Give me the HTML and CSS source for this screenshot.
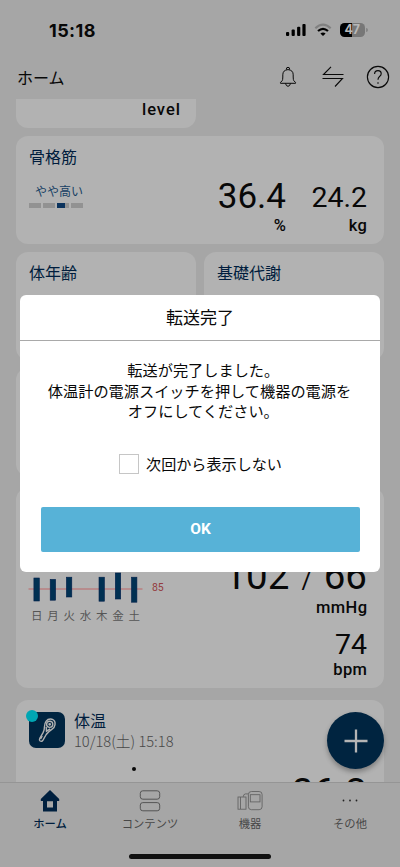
FILE: index.html
```html
<!DOCTYPE html>
<html lang="ja">
<head>
<meta charset="utf-8">
<meta name="viewport" content="width=device-width, initial-scale=1">
<title>ホーム</title>
<link rel="stylesheet" href="styles.css">
</head>
<body>
<div class="app">
  <div class="status">
    <span class="time">15:18</span>
    <div class="status-icons">
      <svg width="20" height="14" viewBox="0 0 20 14"><rect x="0" y="9" width="3.2" height="4" rx="1"/><rect x="5.6" y="6.6" width="3.2" height="6.4" rx="1"/><rect x="11.1" y="3.8" width="3.2" height="9.2" rx="1"/><rect x="16.4" y="1" width="3.2" height="12" rx="1"/></svg>
      <svg class="wifi" width="18" height="14" viewBox="0 0 18 14" fill="none"><path d="M1.3 5.2Q9-1.8 16.7 5.2" stroke="#818181" stroke-width="2.2"/><path d="M4 8Q9 3.6 14 8" stroke="#000" stroke-width="2.2"/><path d="M9 13L6.4 10.4Q9 8.4 11.6 10.4Z" fill="#000"/></svg>
      <div class="battery"><span>47</span></div>
      <i class="battery-tip"></i>
    </div>
  </div>
  <header class="topbar">
    <h1>ホーム</h1>
    <div class="actions">
      <svg width="18" height="22" viewBox="0 0 18 22" fill="none" stroke="#090909"><path d="M1.5 17.3H16.5V16.4L14.8 14.7Q14.2 13.9 14.2 11V8.8Q14.2 4.1 9 3.6Q3.8 4.1 3.8 8.8V11Q3.8 13.9 3.2 14.7L1.5 16.4Z"/><path d="M7.5 3.5Q7 1.3 9 1.3Q11 1.3 10.5 3.5M6.5 17.5Q7.2 20.3 9 20.3Q10.8 20.3 11.5 17.5"/></svg>
      <svg width="22" height="22" viewBox="0 0 22 22" fill="none" stroke="#090909" stroke-width="1.1"><path d="M9 .8L1.5 8.5H21.5M.5 12.5H20.5L13 20.5"/></svg>
      <svg width="24" height="24" viewBox="0 0 24 24" fill="none" stroke="#090909" stroke-width="1.15"><circle cx="12" cy="12" r="10.6"/><path d="M8.6 9Q8.6 5.6 12 5.6Q15.2 5.6 15.2 8.7Q15.2 10.2 13.5 11.5Q12 12.7 12 14.8"/><circle cx="12" cy="18" r=".8" fill="#090909" stroke="none"/></svg>
    </div>
  </header>

  <main class="feed">
    <section class="card level-card"><span class="unit">level</span></section>

    <section class="card muscle">
      <h2>骨格筋</h2>
      <div class="muscle-row">
        <div class="rating">
          <span class="rating-text">やや高い</span>
          <div class="rating-bar"><i></i><i></i><i class="on"></i><i></i></div>
        </div>
        <div class="value"><b class="num">36.4</b><span class="unit">%</span></div>
        <div class="value second"><b class="num small">24.2</b><span class="unit">kg</span></div>
      </div>
    </section>

    <div class="pair">
      <section class="card"><h2>体年齢</h2></section>
      <section class="card"><h2>基礎代謝</h2></section>
    </div>
    <div class="pair">
      <section class="card"></section>
    </div>

    <section class="card pressure">
      <div class="chart">
        <div class="plot">
          <svg width="115" height="32" viewBox="0 0 115 32">
            <path d="M.5 18H114.5" stroke="#b97f80" stroke-width="1.5"/>
            <g fill="#003052" stroke="#001f4b" stroke-width=".6"><rect x="5.9" y="7" width="5.4" height="23"/><rect x="22.2" y="8.4" width="5.4" height="20.8"/><rect x="38.4" y="6.2" width="5.4" height="19.8"/><rect x="71" y="6.2" width="5.4" height="24"/><rect x="87.3" y="2" width="5.4" height="26"/><rect x="103.5" y="6.2" width="5.4" height="25"/></g>
          </svg>
          <span class="limit">85</span>
        </div>
        <div class="days"><span>日</span><span>月</span><span>火</span><span>水</span><span>木</span><span>金</span><span>土</span></div>
      </div>
      <div class="readings">
        <div class="num big">102<span class="slash">/</span>66</div>
        <span class="unit">mmHg</span>
        <div class="num pulse">74</div>
        <span class="unit">bpm</span>
      </div>
    </section>

    <section class="card temp">
      <div class="temp-head">
        <div class="temp-icon">
          <svg width="36" height="36" viewBox="0 0 36 36" fill="none" stroke="#b2b2b2" stroke-width="1.4"><path d="M17.2 9.2Q19.3 6.4 22.9 7.2Q26.6 8.4 26 12.7Q25.8 15.3 22.8 17.3Q19 19.8 17.2 22.5L14 28.2Q12.9 30 11.1 29Q9.9 28.1 10.8 26.4L14.2 20.4Q15.4 18 15.5 14.5Q15.6 11.4 17.2 9.2Z"/><circle cx="20.7" cy="12.3" r="3.1"/><path d="M17.2 15L17.5 19.2L21.2 16.8M13.2 24L11.6 27"/><circle cx="20.7" cy="12.3" r=".7"/></svg>
          <i class="new-dot"></i>
        </div>
        <div>
          <h2>体温</h2>
          <p class="date">10/18(土) 15:18</p>
        </div>
      </div>
      <div class="temp-row"><i class="point"></i><span class="num temp-num">36.2</span></div>
    </section>
  </main>

  <nav class="tabs">
    <div class="tab active"><svg width="20" height="24" viewBox="0 0 20 24"><path fill-rule="evenodd" fill="#00203f" d="M10 1L19.2 10V12H17V22.5H3V12H.8V10ZM7 12.2V18.5H13V12.2Z"/></svg><span>ホーム</span></div>
    <div class="tab"><svg width="22" height="24" viewBox="0 0 22 24" fill="none" stroke="#555"><rect x="1.3" y="1.8" width="19.4" height="8.4" rx="2.5"/><rect x="1.3" y="13.6" width="19.4" height="8.2" rx="2.5"/></svg><span>コンテンツ</span></div>
    <div class="tab"><svg width="26" height="24" viewBox="0 0 26 24" fill="none" stroke="#606060" stroke-width=".85"><rect x="11.4" y="2.5" width="13.7" height="18.2" rx="3"/><rect x="13.3" y="5.7" width="9.7" height="7.2"/><rect x="1" y="8" width="8" height="12.2"/><path d="M3.5 8V20M6.2 7.8Q6.5 4.9 8.5 4.9H11.5"/></svg><span>機器</span></div>
    <div class="tab"><svg width="20" height="24" viewBox="0 0 20 24" fill="#222"><circle cx="3.5" cy="11.5" r=".9"/><circle cx="10" cy="11.5" r=".9"/><circle cx="16.5" cy="11.5" r=".9"/></svg><span>その他</span></div>
  </nav>
  <div class="home-area"><i></i></div>

  <div class="fab"><svg width="24" height="24" viewBox="0 0 24 24"><path d="M12 .5V23.5M.5 12H23.5" stroke="#b5b5b5" stroke-width="2.3"/></svg></div>

  <div class="dialog">
    <div class="dialog-title">転送完了</div>
    <div class="dialog-body">
      <p>転送が完了しました<span class="stop">。</span><br>体温計の電源スイッチを押して機器の電源を<br>オフにしてください<span class="stop">。</span></p>
      <label class="check"><i></i><span>次回から表示しない</span></label>
      <button class="ok">OK</button>
    </div>
  </div>
</div>
</body>
</html>
```
FILE: styles.css
```css
* { box-sizing: border-box; margin: 0; padding: 0; }
body { font-family: "Noto Sans CJK JP", sans-serif; color: #080808; background: #a6a6a6; }
i { font-style: normal; display: block; }
svg { display: block; flex: none; }
.app { position: relative; width: 400px; height: 867px; overflow: hidden; display: flex; flex-direction: column; }

.status { height: 56px; padding: 20px 33px 0 49px; display: flex; justify-content: space-between; align-items: flex-start; }
.time { font: 700 18px/21px Inter, sans-serif; letter-spacing: .4px; }
.status-icons { display: flex; align-items: center; padding-top: 3px; margin-right: -1px; }
.wifi { margin-left: 8px; }
.battery { width: 25.5px; height: 14px; margin-left: 7.5px; border-radius: 4.5px; background: linear-gradient(90deg, #000 47%, #777 47%); color: #b8b8b8; font: 700 12.5px/14px Inter, sans-serif; text-align: center; }
.battery-tip { width: 2px; height: 4px; margin-left: 1px; border-radius: 0 2px 2px 0; background: #858585; }

.topbar { height: 43px; padding: 0 10.5px 0 17px; display: flex; justify-content: space-between; align-items: flex-start; }
h1 { font-size: 16px; font-weight: 400; line-height: 24px; padding-top: 9px; }
.actions { display: flex; align-items: center; padding-top: 9px; }
.actions svg + svg { margin-left: 25px; }
.actions svg:last-child { margin-left: 22px; }

.feed { height: 683px; overflow: hidden; padding: 0 16px; }
.card { background: #b2b2b2; border-radius: 12px; padding: 9px 13px 0; }
h2 { font-size: 16px; font-weight: 400; line-height: 24px; color: #001d3d; }
.unit { display: block; font: 500 16.5px/20px Roboto, sans-serif; letter-spacing: .4px; margin-right: -.4px; }
.num { display: block; font-family: Roboto, sans-serif; font-weight: 400; font-size: 35px; line-height: 42px; }
.level-card { width: 180px; height: 29px; border-radius: 0 0 12px 12px; padding: 1px 16px 0; text-align: right; }
.level-card .unit { letter-spacing: 1px; margin-right: -1px; }
.muscle { height: 108px; margin-top: 8px; padding-top: 8px; }
.muscle-row { display: flex; align-items: flex-start; text-align: right; padding-top: 1px; }
.rating { width: 54px; margin-right: auto; padding-top: 13px; }
.rating-text { display: block; font-size: 12px; line-height: 18px; color: #153e63; }
.rating-bar { display: flex; gap: 2px; margin-top: 3px; }
.rating-bar i { width: 12.2px; height: 5px; background: #929292; }
.rating-bar .on { background: linear-gradient(90deg, #0b335d 70%, #929292 70%); }
.value { padding-top: 7px; }
.value .unit { margin-top: -2px; }
.value.second { width: 85px; padding-right: 4px; }
.num.small { font-size: 28.5px; padding-top: 2px; line-height: 40px; }
.pair { display: grid; grid-template-columns: 1fr 1fr; gap: 8px; margin-top: 8px; }
.pair .card { height: 108px; }
.pair h2 { margin-top: -1px; }
.pressure { height: 200px; margin-top: 12px; padding: 0 17px 0 12px; display: flex; justify-content: space-between; }
.chart { padding-top: 83px; }
.plot { display: flex; align-items: flex-start; }
.limit { font: 400 10.5px/14px Roboto, sans-serif; letter-spacing: -.2px; color: #943c40; margin: 10px 0 0 9px; }
.days { width: 114px; display: grid; grid-template-columns: repeat(7, 16.28px); font-size: 11.5px; line-height: 16px; text-align: center; color: #555; margin: 4px 0 0 .5px; }
.readings { padding-top: 65px; text-align: right; }
.readings .big { font-size: 38.5px; line-height: 46px; }
.slash { font-size: 25px; margin: 0 12px; }
.readings .unit { margin-top: -6px; }
.readings .pulse { font-size: 28.5px; line-height: 36px; margin-top: 9px; }
.readings .pulse + .unit { margin-top: -3px; }
.temp { height: 200px; margin-top: 12px; padding: 12px 17px 0 13px; }
.temp-head { display: flex; gap: 9px; }
.temp-icon { position: relative; width: 36px; height: 36px; border-radius: 7px; background: #002440; }
.new-dot { position: absolute; left: -3px; top: -2px; width: 12px; height: 12px; border-radius: 50%; background: #00a6b3; }
.temp-head h2 { line-height: 20px; margin-top: -2px; }
.date { font-size: 14.7px; line-height: 22px; font-weight: 300; color: #484848; }
.temp-row { display: flex; justify-content: space-between; padding: 15px 0 0 103px; }
.point { width: 4px; height: 4px; border-radius: 50%; background: #080808; }
.temp-num { font-size: 38.5px; line-height: 46px; padding-top: 3px; }

.tabs { height: 65px; border-top: 1px solid #959595; background: #a6a6a6; display: grid; grid-template-columns: repeat(4, 1fr); }
.tab { display: flex; flex-direction: column; align-items: center; padding-top: 6px; font-size: 11.3px; line-height: 16px; color: #484848; }
.tab span { margin-top: 2px; }
.tab.active { color: #001d3d; font-weight: 500; }
.home-area { display: flex; justify-content: center; padding-top: 7px; }
.home-area i { width: 142px; height: 5px; border-radius: 3px; background: #111; }

.fab { position: absolute; left: 327px; top: 712px; width: 57px; height: 57px; border-radius: 50%; background: #002440; display: flex; align-items: center; justify-content: center; box-shadow: 0 3px 5px rgba(0,0,0,.3); }

.dialog { position: absolute; left: 20px; top: 295px; width: 360px; height: 277px; border-radius: 6px; background: #fff; text-align: center; }
.dialog-title { height: 46px; border-bottom: 1px solid #a9a9a9; font-size: 17px; line-height: 43px; }
.dialog-body { padding: 18px 20px 0 21px; }
.dialog-body p { font-size: 15.2px; line-height: 20.5px; margin: 0 -4.5px 0 -6.5px; }
.stop { letter-spacing: -.5em; }
.check { display: flex; align-items: center; justify-content: center; gap: 7px; margin-top: 33.5px; font-size: 15.1px; line-height: 22px; }
.check i { width: 20px; height: 20px; border: 1px solid #c6c6c6; }
.check span { margin-top: -2px; }
.ok { display: block; width: 100%; height: 45px; margin-top: 32.5px; border: 0; border-radius: 2px; background: #57b2d7; color: #fff; font: 700 15.5px/45px Roboto, sans-serif; }
```
